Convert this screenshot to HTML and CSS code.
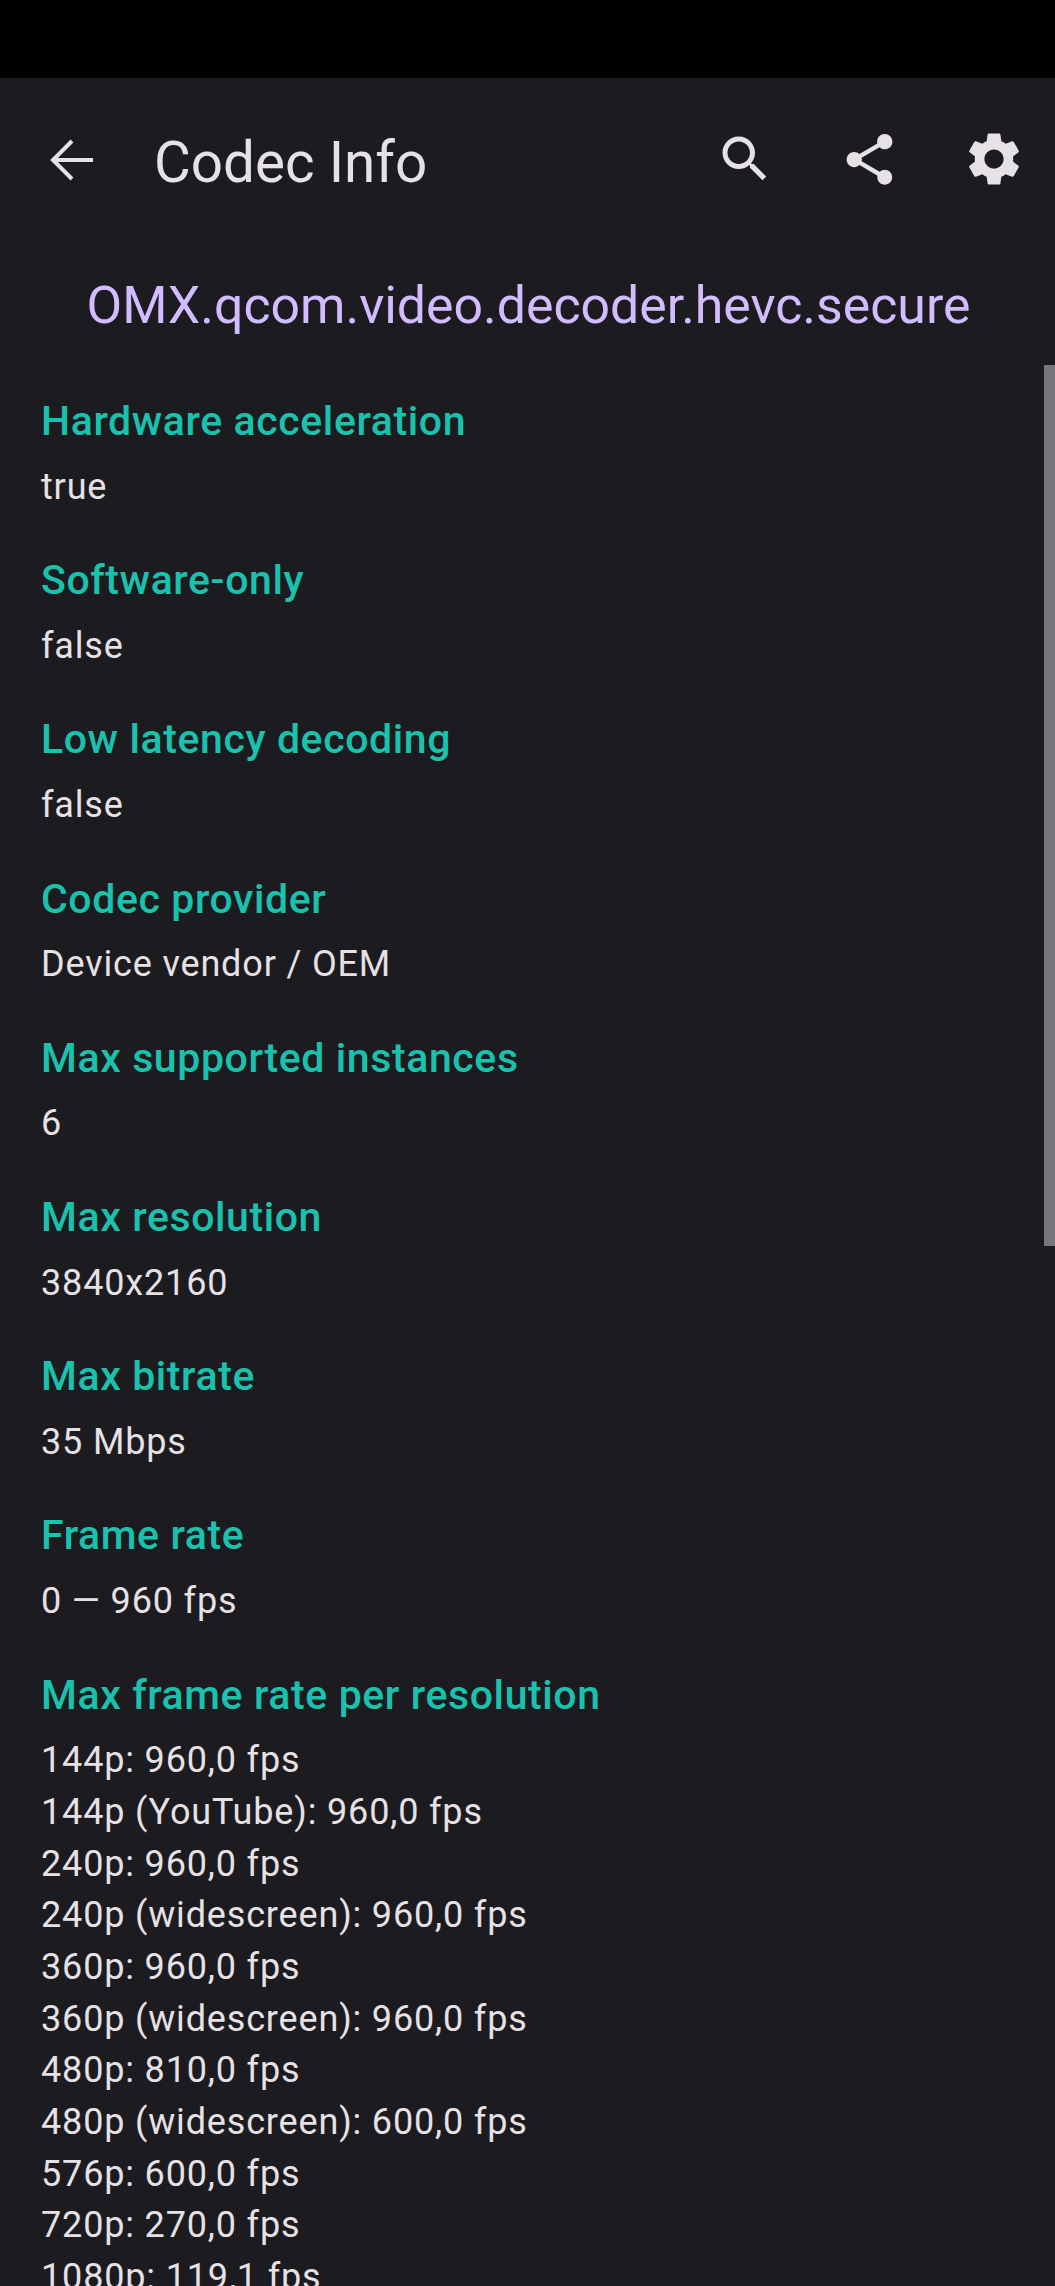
FILE: index.html
```html
<!DOCTYPE html>
<html lang="en">
<head>
  <meta charset="UTF-8" />
  <meta name="viewport" content="width=device-width, initial-scale=1.0" />
  <title>Codec Info</title>
  <link rel="stylesheet" href="styles.css">
</head>
<body>

  <div class="status-bar"></div>

  <div class="toolbar">
    <button class="back-button">
      <svg viewBox="0 0 70 70" class="back-icon"><path d="M15 35H56M35 16L16 35L35 54" /></svg>
    </button>
    <div class="toolbar-title">Codec Info</div>
    <div class="toolbar-actions">
      <button class="action-button">
        <svg viewBox="0 0 24 24" class="icon-search"><path d="M15.5 14h-.79l-.28-.27C15.41 12.59 16 11.11 16 9.5 16 5.91 13.09 3 9.5 3S3 5.91 3 9.5 5.91 16 9.5 16c1.61 0 3.09-.59 4.23-1.57l.27.28v.79l5 4.99L20.49 19l-4.99-5zm-6 0C7.01 14 5 11.99 5 9.5S7.01 5 9.5 5 14 7.01 14 9.5 11.99 14 9.5 14z" /></svg>
      </button>
      <button class="action-button">
        <svg viewBox="0 0 24 24" class="icon-share"><path d="M18 16.08c-.76 0-1.44.3-1.96.77L8.91 12.7c.05-.23.09-.46.09-.7s-.04-.47-.09-.7l7.05-4.11c.54.5 1.25.81 2.04.81 1.66 0 3-1.34 3-3s-1.34-3-3-3-3 1.34-3 3c0 .24.04.47.09.7L8.04 9.81C7.5 9.31 6.79 9 6 9c-1.66 0-3 1.34-3 3s1.34 3 3 3c.79 0 1.5-.31 2.04-.81l7.12 4.16c-.05.21-.08.43-.08.65 0 1.61 1.31 2.92 2.92 2.92 1.61 0 2.92-1.31 2.92-2.92s-1.31-2.92-2.92-2.92z" /></svg>
      </button>
      <button class="action-button">
        <svg viewBox="0 0 24 24" class="icon-settings"><path d="M19.14 12.94c.04-.3.06-.61.06-.94 0-.32-.02-.64-.07-.94l2.03-1.58c.18-.14.23-.41.12-.61l-1.92-3.32c-.12-.22-.37-.29-.59-.22l-2.39.96c-.5-.38-1.03-.7-1.62-.94l-.36-2.54c-.04-.24-.24-.41-.48-.41h-3.84c-.24 0-.43.17-.47.41l-.36 2.54c-.59.24-1.13.57-1.62.94l-2.39-.96c-.22-.08-.47 0-.59.22L2.74 8.87c-.12.21-.08.47.12.61l2.03 1.58c-.05.3-.09.63-.09.94s.02.64.07.94l-2.03 1.58c-.18.14-.23.41-.12.61l1.92 3.32c.12.22.37.29.59.22l2.39-.96c.5.38 1.03.7 1.62.94l.36 2.54c.05.24.24.41.48.41h3.84c.24 0 .44-.17.47-.41l.36-2.54c.59-.24 1.13-.56 1.62-.94l2.39.96c.22.08.47 0 .59-.22l1.92-3.32c.12-.22.07-.47-.12-.61l-2.01-1.58zM12 15.6c-1.98 0-3.6-1.62-3.6-3.6s1.62-3.6 3.6-3.6 3.6 1.62 3.6 3.6-1.62 3.6-3.6 3.6z" /></svg>
      </button>
    </div>
  </div>

  <h1 class="codec-name">OMX.qcom.video.decoder.hevc.secure</h1>

  <div class="scrollbar"></div>

  <div class="info-list">
    <div class="info-item">
      <div class="info-label">Hardware acceleration</div>
      <div class="info-value">true</div>
    </div>
    <div class="info-item">
      <div class="info-label">Software-only</div>
      <div class="info-value">false</div>
    </div>
    <div class="info-item">
      <div class="info-label">Low latency decoding</div>
      <div class="info-value">false</div>
    </div>
    <div class="info-item">
      <div class="info-label">Codec provider</div>
      <div class="info-value">Device vendor / OEM</div>
    </div>
    <div class="info-item">
      <div class="info-label">Max supported instances</div>
      <div class="info-value">6</div>
    </div>
    <div class="info-item">
      <div class="info-label">Max resolution</div>
      <div class="info-value">3840x2160</div>
    </div>
    <div class="info-item">
      <div class="info-label">Max bitrate</div>
      <div class="info-value">35 Mbps</div>
    </div>
    <div class="info-item">
      <div class="info-label">Frame rate</div>
      <div class="info-value">0 — 960 fps</div>
    </div>
    <div class="info-item">
      <div class="info-label">Max frame rate per resolution</div>
      <div class="info-value">144p: 960,0 fps</div>
      <div class="info-value">144p (YouTube): 960,0 fps</div>
      <div class="info-value">240p: 960,0 fps</div>
      <div class="info-value">240p (widescreen): 960,0 fps</div>
      <div class="info-value">360p: 960,0 fps</div>
      <div class="info-value">360p (widescreen): 960,0 fps</div>
      <div class="info-value">480p: 810,0 fps</div>
      <div class="info-value">480p (widescreen): 600,0 fps</div>
      <div class="info-value">576p: 600,0 fps</div>
      <div class="info-value">720p: 270,0 fps</div>
      <div class="info-value">1080p: 119,1 fps</div>
    </div>
  </div>

</body>
</html>
```

FILE: styles.css
```css
html, body {
  height: 2286px;
  overflow: hidden;
}

body {
  margin: 0;
  position: relative;
  background-color: #1c1b1f;
  font-family: Roboto, "Noto Sans", sans-serif;
  color: #e6e1e5;
}

.status-bar {
  height: 78px;
  background-color: #000;
}

.toolbar {
  display: flex;
  align-items: center;
  height: 162px;
}

.back-button,
.action-button {
  display: flex;
  align-items: center;
  justify-content: center;
  padding: 0;
  background: none;
  border: none;
}

.back-button {
  width: 144px;
  flex-shrink: 0;
  margin-top: 2px;
}

.back-icon {
  width: 70px;
  height: 70px;
  fill: none;
  stroke: #e6e1e5;
  stroke-width: 4;
}

.toolbar-title {
  flex: 1;
  padding: 6px 0 0 10px;
  font-size: 56.6px;
  color: #e6e1e5;
}

.toolbar-actions {
  display: flex;
  padding-left: 1px;
}

.action-button {
  width: 124px;
}

.action-button svg {
  fill: #e6e1e5;
}

.icon-search {
  width: 60px;
  height: 60px;
}

.icon-share {
  width: 61px;
  height: 61px;
}

.icon-settings {
  width: 64px;
  height: 64px;
  margin-left: 2px;
}

.codec-name {
  margin: 31px 0 0;
  padding-left: 2px;
  font-size: 51.8px;
  font-weight: 400;
  line-height: 70px;
  text-align: center;
  color: #d0bcff;
}

.scrollbar {
  position: absolute;
  top: 365px;
  right: 0;
  width: 11px;
  height: 881px;
  background-color: #79757c;
}

.info-list {
  padding: 50px 41px 0;
}

.info-item {
  margin-bottom: 37px;
}

.info-label {
  margin-bottom: 10.5px;
  font-size: 41px;
  font-weight: 500;
  line-height: 60px;
  color: #1ac2ae;
  letter-spacing: 0.6px;
}

.info-value {
  font-size: 36px;
  line-height: 51.7px;
  letter-spacing: 0.84px;
}
```
